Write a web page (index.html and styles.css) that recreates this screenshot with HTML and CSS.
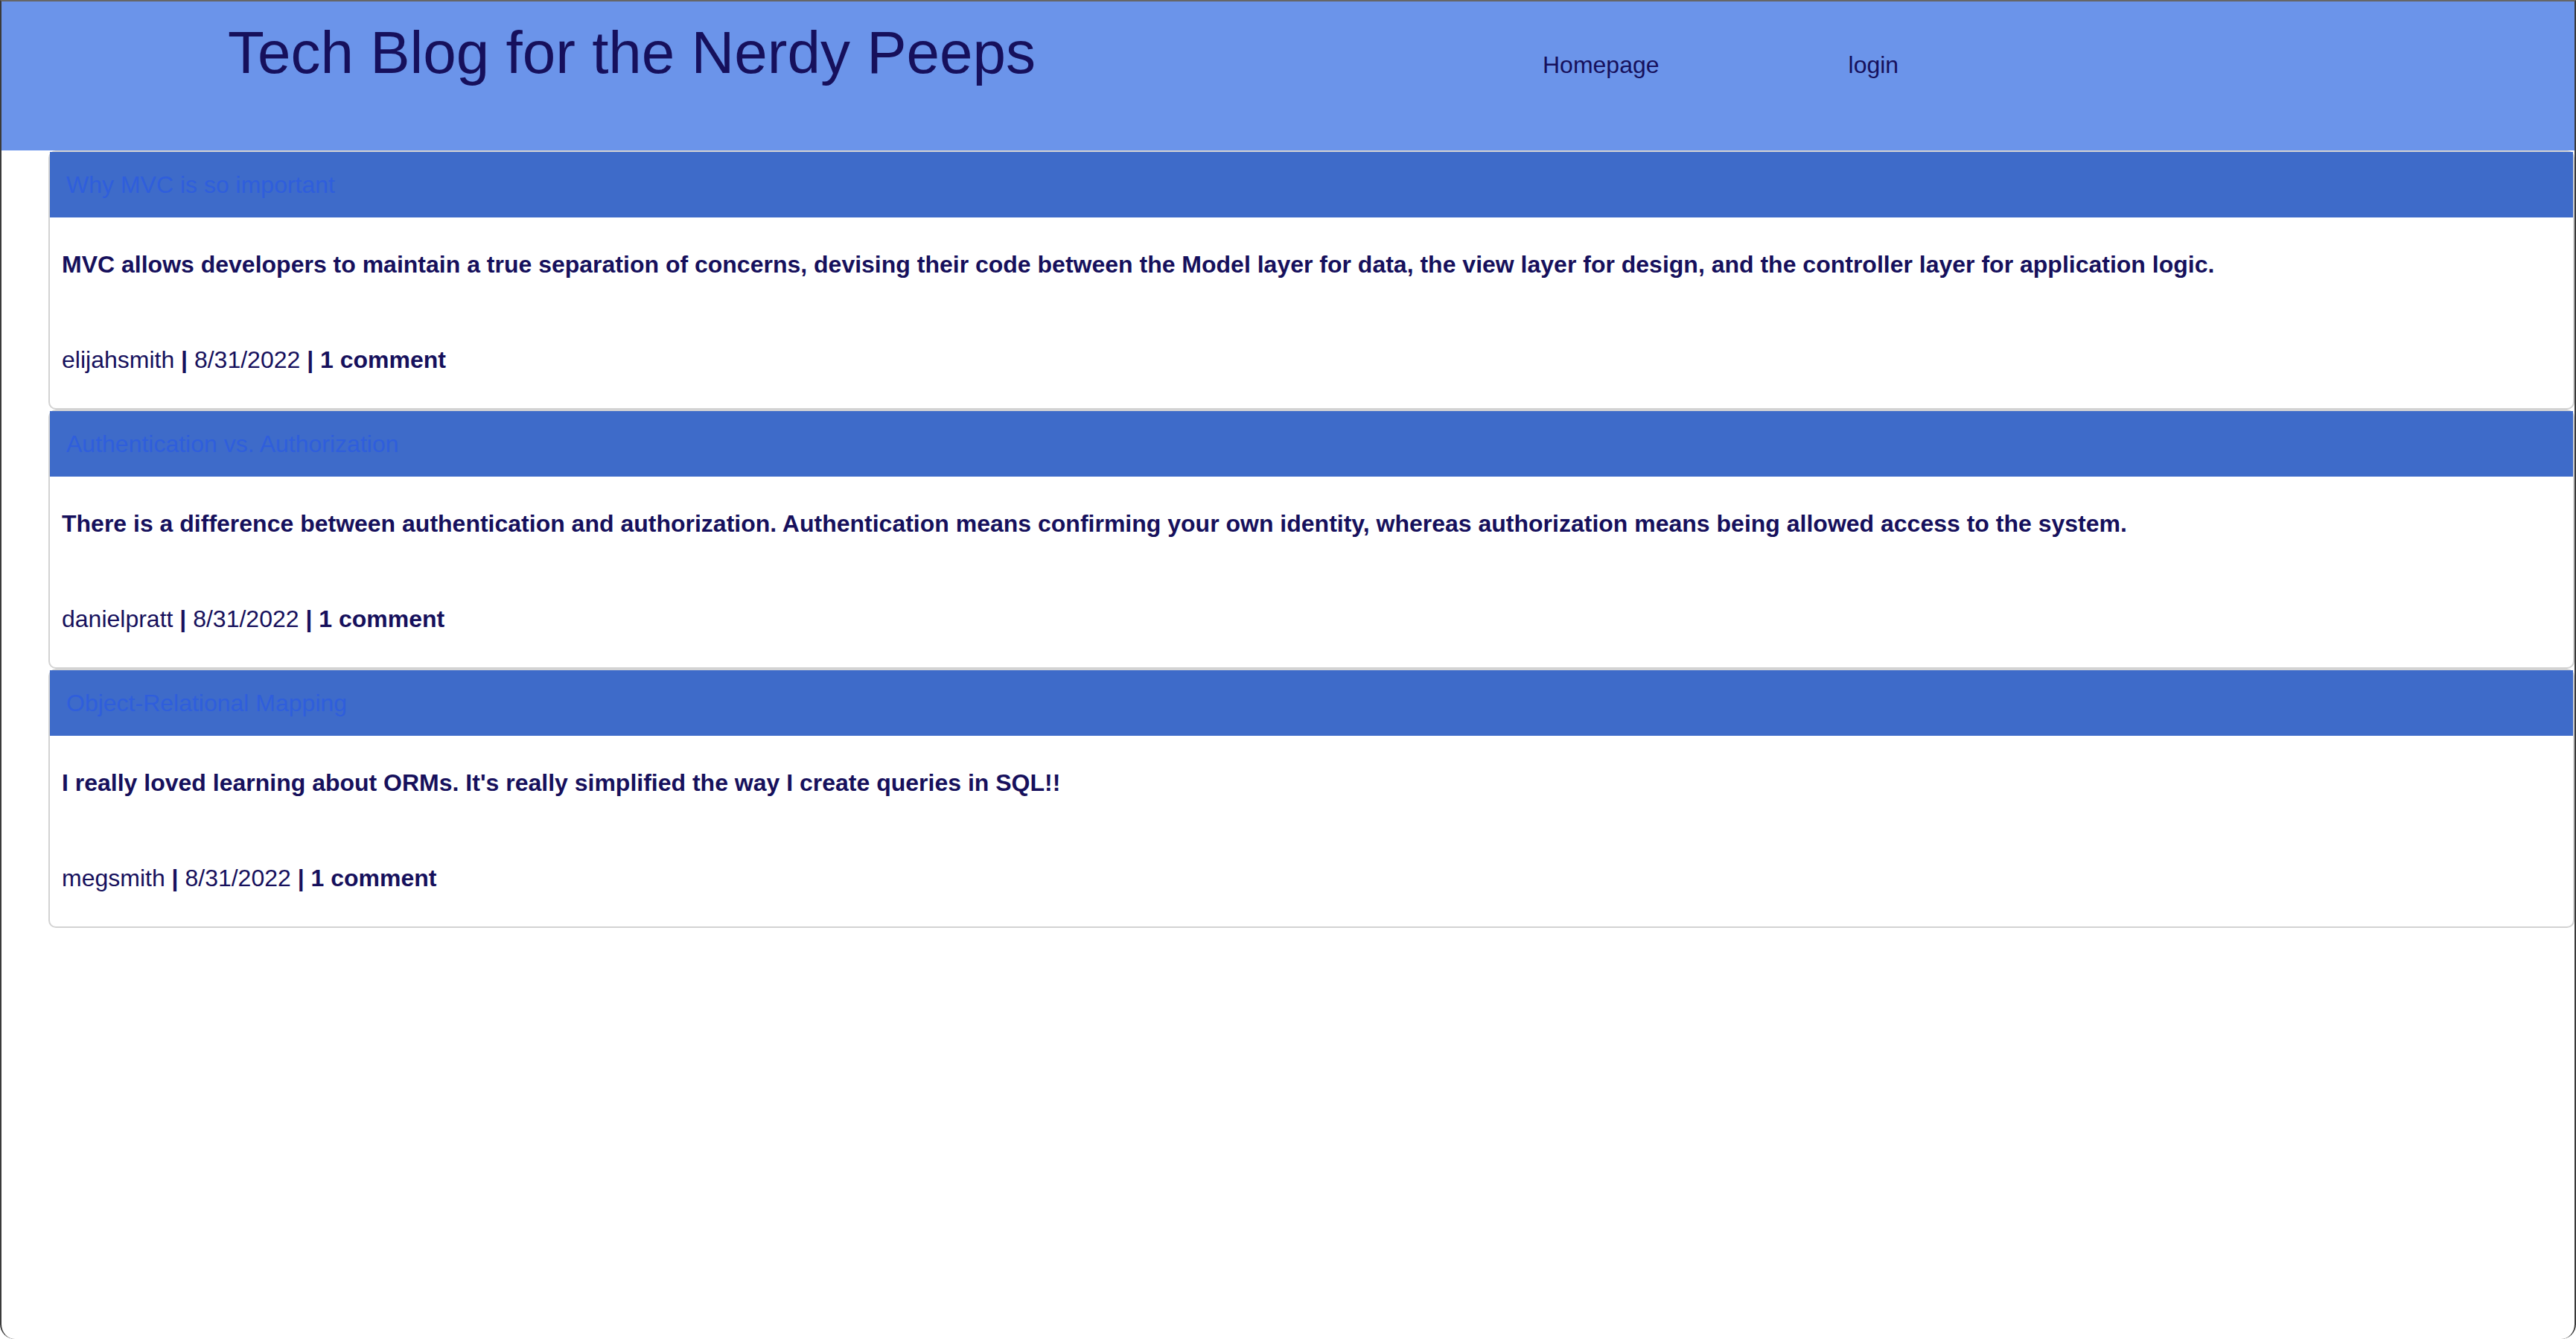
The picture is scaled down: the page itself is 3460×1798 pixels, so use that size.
FILE: index.html
```html
<!DOCTYPE html>
<html lang="en">
<head>
<meta charset="utf-8">
<title>Tech Blog for the Nerdy Peeps</title>
<link rel="stylesheet" href="styles.css">
</head>
<body>
<div class="window">
  <header class="site-header">
    <h1 class="brand">Tech Blog for the Nerdy Peeps</h1>
    <nav class="nav">
      <a class="nav-link" href="#">Homepage</a>
      <a class="nav-link" href="#">login</a>
    </nav>
  </header>
  <main class="posts">
    <article class="post">
      <div class="post-head"><a class="post-title" href="#">Why MVC is so important</a></div>
      <div class="post-body">
        <p class="post-text">MVC allows developers to maintain a true separation of concerns, devising their code between the Model layer for data, the view layer for design, and the controller layer for application logic.</p>
        <p class="post-meta">elijahsmith <b>|</b> 8/31/2022 <b>| 1 comment</b></p>
      </div>
    </article>
    <article class="post">
      <div class="post-head"><a class="post-title" href="#">Authentication vs. Authorization</a></div>
      <div class="post-body">
        <p class="post-text">There is a difference between authentication and authorization. Authentication means confirming your own identity, whereas authorization means being allowed access to the system.</p>
        <p class="post-meta">danielpratt <b>|</b> 8/31/2022 <b>| 1 comment</b></p>
      </div>
    </article>
    <article class="post">
      <div class="post-head"><a class="post-title" href="#">Object-Relational Mapping</a></div>
      <div class="post-body">
        <p class="post-text">I really loved learning about ORMs. It's really simplified the way I create queries in SQL!!</p>
        <p class="post-meta">megsmith <b>|</b> 8/31/2022 <b>| 1 comment</b></p>
      </div>
    </article>
  </main>
</div>
</body>
</html>
```

FILE: styles.css
```css
html, body {
  margin: 0;
  padding: 0;
  background: #ffffff;
}

body {
  font-family: "Liberation Sans", Arial, Helvetica, sans-serif;
  color: #16105c;
}

.window {
  box-sizing: border-box;
  width: 3460px;
  height: 1798px;
  border-top: 2px solid #666666;
  border-left: 2px solid #3a3a3a;
  border-right: 2px solid #3a3a3a;
  border-bottom: 0;
  border-radius: 0 0 20px 20px;
  overflow: hidden;
  background: #ffffff;
}

.site-header {
  box-sizing: border-box;
  height: 200px;
  background: #6b94ea;
  display: flex;
  align-items: baseline;
  padding: 23px 0 0 304px;
}

.brand {
  margin: 0;
  width: 1766px;
  flex: 0 0 auto;
  font-size: 80px;
  font-weight: normal;
  color: #16105c;
  line-height: normal;
}

.nav {
  display: flex;
  align-items: baseline;
  gap: 254px;
}

.nav-link {
  font-size: 32px;
  color: #16105c;
  text-decoration: none;
}

.posts {
  display: flex;
  flex-direction: column;
  margin-left: 63px;
}

.post {
  border: 2px solid #d3d3d3;
  border-radius: 10px;
  background: #ffffff;
}

.post-head {
  background: #3e6bc9;
  padding: 26px 22px 25px;
  font-size: 32px;
  line-height: 37px;
}

.post-title {
  font-size: 32px;
  color: #2f5edc;
  text-decoration: none;
}

.post-body {
  padding: 45px 16px 46px;
  font-size: 32px;
}

.post-text {
  margin: 0 0 91px;
  font-size: 32px;
  line-height: 37px;
  font-weight: bold;
}

.post-meta {
  margin: 0;
  font-size: 32px;
  line-height: 37px;
}
```
